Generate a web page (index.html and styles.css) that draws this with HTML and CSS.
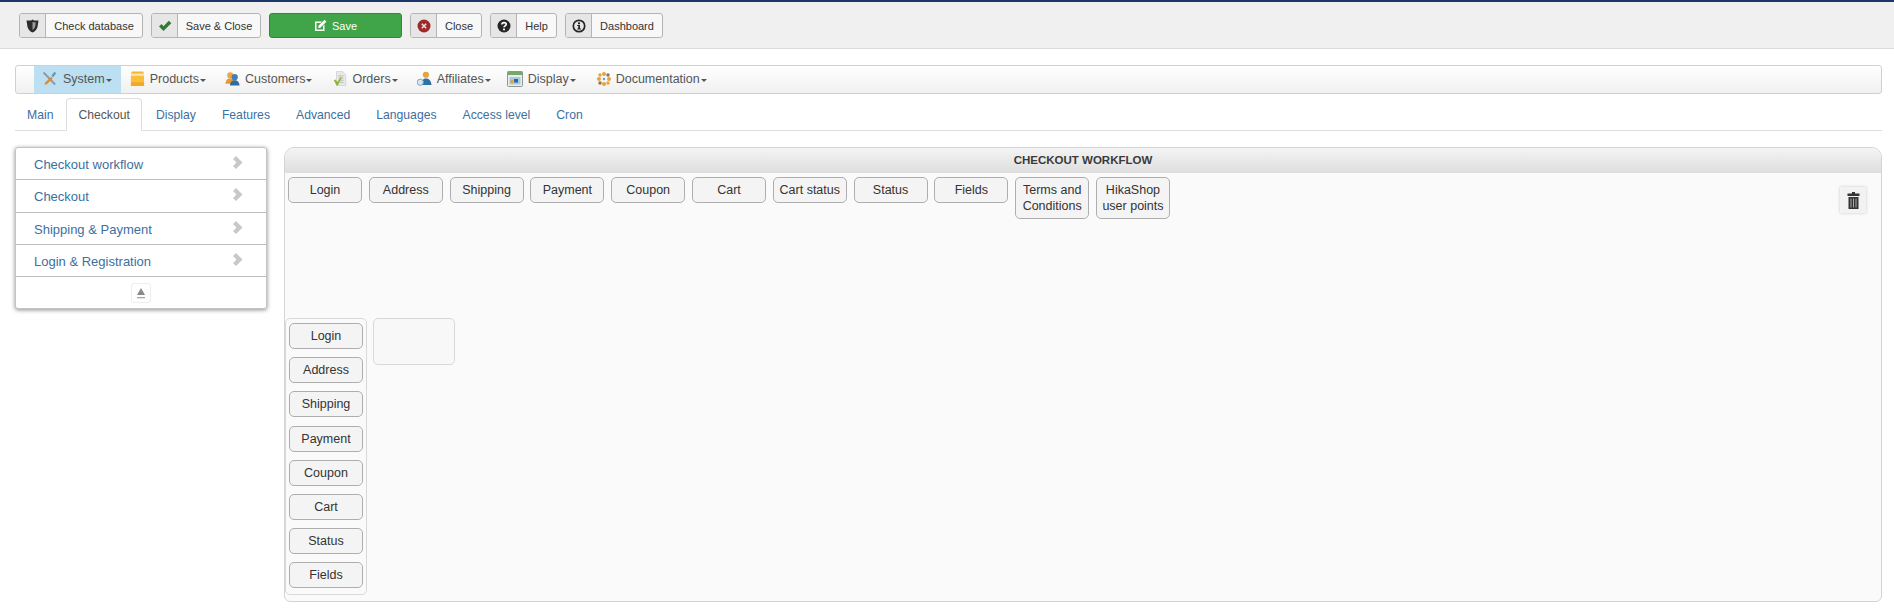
FILE: index.html
```html
<!DOCTYPE html>
<html lang="en">
<head>
<meta charset="utf-8">
<title>Checkout workflow</title>
<link rel="stylesheet" href="styles.css">
</head>
<body>
<header class="toolbar">
  <a class="tbtn w-check"><span class="tico"><svg width="13" height="14" viewBox="0 0 13 14"><path d="M6.500 0.500 L8 1.500 L12.500 1.500 L11.500 8 C11 10.500 8.500 12.700 6.500 13.500 C4.500 12.700 2 10.500 1.500 8 L.5 1.500 L5 1.500 Z" fill="#2c2c2c"/><path d="M6.500 3 L9.800 3.600 L9.200 7.500 C8.900 9 7.800 10.300 6.500 11 Z" fill="#9a9a9a"/></svg></span><span class="tlabel">Check database</span></a>
  <a class="tbtn w-saveclose"><span class="tico"><svg width="14" height="12" viewBox="0 0 14 12"><path d="M1 6.500 L3.500 4 L5.500 6.200 L10.800 .8 L13.300 3.300 L5.500 11 Z" fill="#2f7d32"/></svg></span><span class="tlabel">Save &amp; Close</span></a>
  <a class="save"><svg width="13" height="13" viewBox="0 0 13 13"><path d="M1 2.500 H8 L6.500 4 H2.500 V10.500 H9 V7 L10.500 5.500 V12 H1 Z" fill="#fff"/><path d="M4.500 6.800 L10.500 .8 L12.400 2.700 L6.400 8.700 L4.200 9 Z" fill="#fff"/></svg><span>Save</span></a>
  <a class="tbtn w-close"><span class="tico"><svg width="14" height="14" viewBox="0 0 14 14"><circle cx="7" cy="7" r="6.500" fill="#9c2a2a"/><path d="M4.800 4.800 L9.200 9.200 M9.200 4.800 L4.800 9.200" stroke="#f4dcdc" stroke-width="1.600"/></svg></span><span class="tlabel">Close</span></a>
  <a class="tbtn w-help"><span class="tico"><svg width="14" height="14" viewBox="0 0 14 14"><circle cx="7" cy="7" r="6.500" fill="#262626"/><path d="M4.900 5.500 C4.900 3 9.200 3 9.200 5.300 C9.200 6.800 7 6.800 7 8.300" fill="none" stroke="#fff" stroke-width="1.600"/><rect x="6.100" y="9.500" width="1.800" height="1.800" fill="#fff"/></svg></span><span class="tlabel">Help</span></a>
  <a class="tbtn w-dash"><span class="tico"><svg width="14" height="14" viewBox="0 0 14 14"><circle cx="7" cy="7" r="5.700" fill="none" stroke="#262626" stroke-width="1.700"/><rect x="6" y="3.400" width="2" height="1.800" fill="#262626"/><path d="M5.200 6 H8 V9.500 H9 V10.500 H5.200 V9.500 H6.200 V7 H5.200 Z" fill="#262626"/></svg></span><span class="tlabel">Dashboard</span></a>
</header>

<main class="page">
  <nav class="menubar">
    <a class="mitem active"><svg width="16" height="17" viewBox="0 0 18 18"><path d="M2.500 1.500 L5 4 L15.500 15 L14 16.500 L3.500 5.500 L1 3 Z" fill="#8e9aa3"/><path d="M14 1.500 L16 3 L12.500 7.500 L10.500 6 Z" fill="#6a97b5"/><path d="M10.500 7 L3.500 13.500 L3 16 L5.500 15.500 L12 9 Z" fill="#e08a2c"/></svg><span>System</span><i class="caret"></i></a>
    <a class="mitem"><svg width="15" height="17" viewBox="0 0 16 18"><path d="M2 1.500 H14 L15 4 H1 Z" fill="#f3b33c"/><rect x="1" y="4" width="14" height="2" fill="#fce7a8"/><rect x="1" y="6" width="14" height="11" fill="#fbbe3a"/><rect x="1" y="13" width="14" height="4" fill="#f5a623"/></svg><span>Products</span><i class="caret"></i></a>
    <a class="mitem"><svg width="15" height="17" viewBox="0 0 17 18"><circle cx="6" cy="5.500" r="3.500" fill="#f0a63a"/><path d="M0.500 15 C1 10 3 9 6 9 C8 9 9 10 9.500 11 L8 15 Z" fill="#e99a2e"/><circle cx="11" cy="7.500" r="3.500" fill="#3f7fb3"/><path d="M5.500 17 C6 12.500 8 11 11 11 C14 11 16 12.500 16.500 17 Z" fill="#2f6d9f"/></svg><span>Customers</span><i class="caret"></i></a>
    <a class="mitem"><svg width="14" height="17" viewBox="0 0 16 18"><path d="M4 1 H11 L14.500 4.500 V17 H4 Z" fill="#e8e8e8" stroke="#c4c4c4" stroke-width=".6"/><path d="M6 6 H12 M6 8.500 H12 M8 11 H12 M8 13.500 H12" stroke="#aaa" stroke-width=".8"/><path d="M1 11 L3 10 L5 13 L9 7 L10 8 L5.500 17 H4 Z" fill="#8fb832"/></svg><span>Orders</span><i class="caret"></i></a>
    <a class="mitem"><svg width="15" height="17" viewBox="0 0 16 18"><circle cx="9.500" cy="5" r="3.300" fill="#e9a23a"/><path d="M5 16 C5 10.500 7 9 9.500 9 C12.500 9 15 11 15.500 16 Z" fill="#2c72a5"/><circle cx="3.500" cy="13" r="3.300" fill="#d9e6ef" stroke="#7aa2bd" stroke-width="1"/></svg><span>Affiliates</span><i class="caret"></i></a>
    <a class="mitem"><svg width="16" height="16" viewBox="0 0 16 16"><rect x=".5" y=".5" width="15" height="15" rx="1" fill="#e9edf0" stroke="#8a9a8c"/><rect x=".5" y=".5" width="15" height="3.500" fill="#78a868"/><rect x="2.500" y="6" width="11" height="7.500" fill="#a9c7e0"/><rect x="7" y="8" width="4" height="3.500" fill="#2b68a8"/><rect x="3.500" y="9" width="2.500" height="3" fill="#d9a14a"/></svg><span>Display</span><i class="caret"></i></a>
    <a class="mitem"><svg width="14" height="14" viewBox="0 0 14 14"><g fill="#e9a23a"><circle cx="7" cy="2" r="2"/><circle cx="7" cy="12" r="2"/><circle cx="2" cy="7" r="2"/><circle cx="12" cy="7" r="2"/><circle cx="3" cy="3" r="1.700"/><circle cx="11" cy="11" r="1.700"/></g><g fill="#8a7550"><circle cx="11" cy="3" r="1.700"/><circle cx="3" cy="11" r="1.700"/></g><path d="M7 5.500 L8.500 7 L7 8.500 L5.500 7 Z" fill="#5d93bd"/></svg><span>Documentation</span><i class="caret"></i></a>
  </nav>

  <ul class="tabs">
    <li class="tab">Main</li>
    <li class="tab current">Checkout</li>
    <li class="tab">Display</li>
    <li class="tab">Features</li>
    <li class="tab">Advanced</li>
    <li class="tab">Languages</li>
    <li class="tab">Access level</li>
    <li class="tab">Cron</li>
  </ul>

  <div class="content">
    <aside class="sidenav">
      <a class="sitem"><span>Checkout workflow</span><svg class="chev" width="10" height="13" viewBox="0 0 10 13"><path d="M0 3 L3 0 L9.500 6.500 L3 13 L0 10 L3.500 6.500 Z" fill="#c8c8c8"/></svg></a>
      <a class="sitem"><span>Checkout</span><svg class="chev" width="10" height="13" viewBox="0 0 10 13"><path d="M0 3 L3 0 L9.500 6.500 L3 13 L0 10 L3.500 6.500 Z" fill="#c8c8c8"/></svg></a>
      <a class="sitem"><span>Shipping &amp; Payment</span><svg class="chev" width="10" height="13" viewBox="0 0 10 13"><path d="M0 3 L3 0 L9.500 6.500 L3 13 L0 10 L3.500 6.500 Z" fill="#c8c8c8"/></svg></a>
      <a class="sitem"><span>Login &amp; Registration</span><svg class="chev" width="10" height="13" viewBox="0 0 10 13"><path d="M0 3 L3 0 L9.500 6.500 L3 13 L0 10 L3.500 6.500 Z" fill="#c8c8c8"/></svg></a>
      <div class="sfoot"><span class="collapse"><svg width="10" height="11" viewBox="0 0 10 11"><path d="M5 0 L9 7 H1 Z" fill="#8a8a8a"/><rect x="1" y="9" width="8" height="1.300" fill="#a5a5a5"/></svg></span></div>
    </aside>

    <section class="panel">
      <h2 class="phead">CHECKOUT WORKFLOW</h2>
      <div class="palette">
        <a class="block">Login</a>
        <a class="block">Address</a>
        <a class="block">Shipping</a>
        <a class="block">Payment</a>
        <a class="block">Coupon</a>
        <a class="block">Cart</a>
        <a class="block">Cart status</a>
        <a class="block">Status</a>
        <a class="block">Fields</a>
        <a class="block">Terms and Conditions</a>
        <a class="block">HikaShop user points</a>
        <a class="trash"><svg width="13" height="17" viewBox="0 0 13 17"><path d="M5 0 H8 V1.500 H12.500 V4 H.5 V1.500 H5 Z" fill="#333"/><path d="M1.500 5 H11.500 V17 H1.500 Z" fill="#333"/><path d="M4 6.500 V15.500 M6.500 6.500 V15.500 M9 6.500 V15.500" stroke="#bbb" stroke-width=".9"/></svg></a>
      </div>
      <div class="steps">
        <div class="column">
          <a class="block">Login</a>
          <a class="block">Address</a>
          <a class="block">Shipping</a>
          <a class="block">Payment</a>
          <a class="block">Coupon</a>
          <a class="block">Cart</a>
          <a class="block">Status</a>
          <a class="block">Fields</a>
        </div>
        <div class="dropzone"></div>
      </div>
    </section>
  </div>
</main>
</body>
</html>
```
FILE: styles.css
```css
* { box-sizing: border-box; }
html, body { margin: 0; padding: 0; }
body {
  width: 1894px;
  height: 608px;
  overflow: hidden;
  background: #fff;
  color: #333;
  font-family: "Liberation Sans", Arial, sans-serif;
  font-size: 13px;
}
a { display: block; }

.toolbar {
  display: flex;
  align-items: flex-start;
  gap: 8px;
  height: 49px;
  padding: 11px 0 0 19px;
  background: #f0f0f0;
  border-top: 2px solid #1a3867;
  border-bottom: 1px solid #dcdcdc;
}
.tbtn {
  display: flex;
  height: 25px;
  background: #f8f8f8;
  border: 1px solid #b4b4b4;
  border-radius: 3px;
  font-size: 11px;
  color: #333;
}
.tico {
  display: flex;
  align-items: center;
  justify-content: center;
  width: 26px;
  flex: none;
  background: #e6e6e6;
  border-right: 1px solid #b4b4b4;
  border-radius: 2px 0 0 2px;
}
.tlabel { flex: 1; text-align: center; line-height: 25px; }
.w-check { width: 124px; }
.w-saveclose { width: 110px; }
.w-close { width: 72px; }
.w-help { width: 67px; }
.w-dash { width: 98px; }
.save {
  display: flex;
  align-items: center;
  justify-content: center;
  gap: 5px;
  width: 133px;
  height: 25px;
  background: #40a548;
  border: 1px solid #2f8a38;
  border-radius: 3px;
  color: #fff;
  font-size: 11px;
}

.page { padding: 16px 12px 0 15px; }

.menubar {
  display: flex;
  height: 29px;
  padding-left: 18px;
  background: linear-gradient(#fff, #f0f0f0);
  border: 1px solid #d0d0d0;
  border-radius: 3px;
}
.mitem {
  display: flex;
  align-items: center;
  gap: 5px;
  padding: 0 11px 2px 8px;
  font-size: 12.500px;
  color: #555;
}
.mitem.active {
  margin-right: 1px;
  padding-right: 9px;
  background: #bcdff1;
}
.mitem:nth-child(3) { padding-right: 13px; }
.mitem:nth-child(5) { padding-right: 8px; }
.mitem:nth-child(6) { padding-right: 13px; }
.caret {
  width: 0;
  height: 0;
  margin-left: -4px;
  margin-top: 3px;
  border-left: 3.500px solid transparent;
  border-right: 3.500px solid transparent;
  border-top: 3px solid #555;
}

.tabs {
  display: flex;
  height: 33px;
  margin: 4px 0 0;
  padding: 0;
  list-style: none;
  border-bottom: 1px solid #ddd;
}
.tab {
  height: 33px;
  margin: 0 1px;
  padding: 0 11px;
  line-height: 33px;
  font-size: 12.200px;
  color: #3d6f9f;
  border: 1px solid transparent;
  border-radius: 4px 4px 0 0;
}
.tab:first-child {
  margin-left: 0;
  padding-right: 10px;
}
.tab.current {
  color: #555;
  background: #fff;
  border-color: #ddd #ddd #fff;
}

.content {
  display: flex;
  align-items: flex-start;
  gap: 17px;
  margin-top: 16px;
}

.sidenav {
  width: 252px;
  flex: none;
  background: #fff;
  border: 1px solid #c4c4c4;
  border-radius: 3px;
  box-shadow: 0 1px 4px rgba(0,0,0,.45);
}
.sitem {
  display: flex;
  align-items: flex-start;
  justify-content: space-between;
  height: 32px;
  padding: 9px 23px 0 18px;
  border-bottom: 1px solid #bdbdbd;
  font-size: 13px;
  line-height: 16px;
  color: #3d6f9f;
}
.sitem:nth-child(2) { height: 33px; }
.chev { margin-top: -1px; }
.sfoot {
  display: flex;
  justify-content: center;
  height: 31px;
  padding-top: 6px;
}
.collapse {
  display: flex;
  align-items: center;
  justify-content: center;
  width: 20px;
  height: 20px;
  border: 1px solid #eee;
  border-radius: 3px;
}

.panel {
  flex: 1;
  height: 455px;
  background: #fafafa;
  border: 1px solid #d4d4d4;
  border-radius: 10px 10px 6px 6px;
  overflow: hidden;
}
.phead {
  height: 25px;
  margin: 0;
  background: linear-gradient(#f4f4f4, #dedede);
  font-size: 11.500px;
  line-height: 25px;
  text-align: center;
  color: #3a3a3a;
}
.palette {
  display: flex;
  align-items: flex-start;
  gap: 6.800px;
  height: 145px;
  padding: 4px 15px 0 3px;
}
.block {
  width: 74px;
  min-height: 26px;
  padding: 4px 4px;
  background: #f4f4f4;
  border: 1px solid #aeaeae;
  border-radius: 5px;
  font-size: 12.500px;
  line-height: 16px;
  text-align: center;
  color: #333;
}
.trash {
  display: flex;
  align-items: center;
  justify-content: center;
  width: 26px;
  height: 26px;
  margin: 10px 0 0 auto;
  background: #f2f2f2;
  box-shadow: 0 0 3px rgba(0,0,0,.2);
}
.steps {
  display: flex;
  align-items: flex-start;
  gap: 6px;
}
.column {
  display: flex;
  flex-direction: column;
  gap: 8.200px;
  width: 82px;
  height: 277px;
  padding: 4px 3px;
  border: 1px solid #d8d8d8;
  border-radius: 5px;
}
.dropzone {
  width: 82px;
  height: 47px;
  background: #f8f8f8;
  border: 1px solid #d8d8d8;
  border-radius: 5px;
}
```
